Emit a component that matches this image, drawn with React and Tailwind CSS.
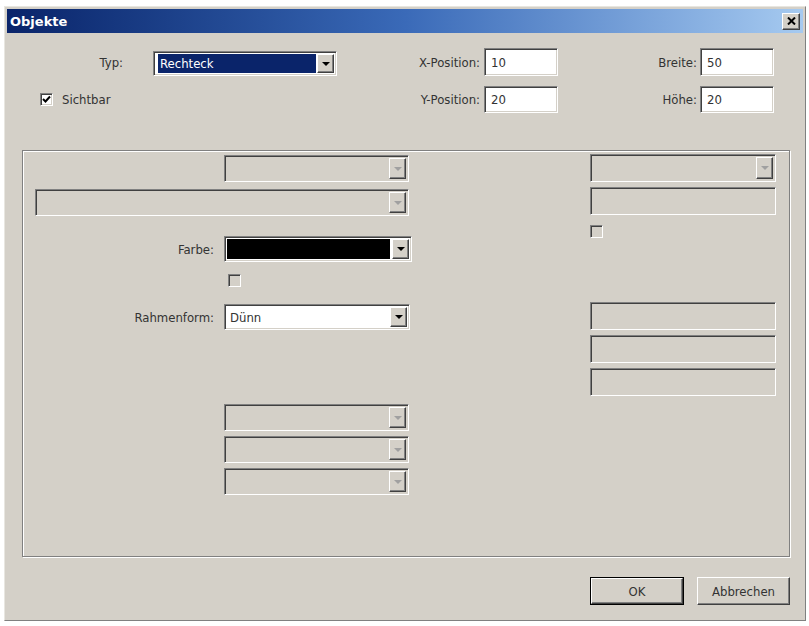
import React from "react";

const sunken =
  "border border-t-[#808080] border-l-[#808080] border-b-white border-r-white shadow-[inset_1px_1px_0_#404040,inset_-1px_-1px_0_#d4d0c8]";
const raised =
  "bg-[#d4d0c8] border border-t-white border-l-white border-b-[#404040] border-r-[#404040] shadow-[inset_-1px_-1px_0_#808080]";

const Arrow = ({ disabled }) => (
  <div className={`w-[17px] h-full shrink-0 flex items-center justify-center ${raised}`}>
    <div
      className={`w-0 h-0 border-l-[4px] border-r-[4px] border-t-[4px] border-l-transparent border-r-transparent ${
        disabled ? "border-t-[#a0a0a0]" : "border-t-black"
      }`}
    ></div>
  </div>
);

// combo box, sunken frame with the arrow button on the right
const Dropdown = ({ className = "", disabled, children }) => (
  <div
    className={`flex p-[2px] ${sunken} ${disabled ? "bg-[#d4d0c8]" : "bg-white"} ${className}`}
  >
    <div className="flex-1 flex items-center min-w-0">{children}</div>
    <Arrow disabled={disabled} />
  </div>
);

const TextBox = ({ className = "", disabled, value }) => (
  <div
    className={`flex items-center pl-[6px] text-[#333] ${sunken} ${disabled ? "bg-[#d4d0c8]" : "bg-white"} ${className}`}
  >
    {value}
  </div>
);

const CheckBox = ({ checked, disabled, className = "" }) => (
  <div
    className={`w-[13px] h-[13px] shrink-0 flex items-center justify-center ${sunken} ${
      disabled ? "bg-[#d4d0c8]" : "bg-white"
    } ${className}`}
  >
    {checked && (
      <svg width="9" height="9" viewBox="0 0 9 9">
        <path d="M1 4 L3.5 6.5 L8 1.5" stroke="#000" strokeWidth="2" fill="none" />
      </svg>
    )}
  </div>
);

const Label = ({ className = "", children }) => (
  <div className={`text-right text-[#333] ${className}`}>{children}</div>
);

export default function App() {
  return (
    <div className="w-[809px] h-[626px] bg-white pt-[6px] pl-[4px] font-['DejaVu_Sans_Condensed','DejaVu_Sans',sans-serif] text-[13px] leading-none">
      {/* Window */}
      <div className="w-[802px] h-[615px] bg-[#d4d0c8] border border-t-[#e8e6e0] border-l-[#e8e6e0] border-b-[#808080] border-r-[#808080] p-[2px] flex flex-col">
        {/* Title bar */}
        <div className="h-[24px] shrink-0 flex items-center justify-between bg-gradient-to-r from-[#0a246a] via-[#3a6ab8] to-[#a6caf0] pl-[3px] pr-[3px]">
          <span className="text-white font-bold text-[13px] font-['DejaVu_Sans',sans-serif]">Objekte</span>
          <div className={`w-[18px] h-[17px] flex items-center justify-center ${raised}`}>
            <svg width="9" height="8" viewBox="0 0 9 8">
              <path d="M1 0.5 L8 7.5 M8 0.5 L1 7.5" stroke="#000" strokeWidth="2" />
            </svg>
          </div>
        </div>

        {/* Body */}
        <div className="flex-1 flex flex-col">
          {/* Row 1 */}
          <div className="mt-[15px] h-[28px] flex items-center">
            <div className="w-[330px] flex items-center h-full">
              <Label className="w-[116px]">Typ:</Label>
              <Dropdown className="ml-[30px] w-[184px] h-[25px] self-end">
                <div className="ml-[2px] h-[19px] flex-1 bg-[#0a246a] text-white flex items-center pl-[2px] mr-[1px]">
                  Rechteck
                </div>
              </Dropdown>
            </div>
            <Label className="w-[143px]">X-Position:</Label>
            <TextBox className="ml-[4px] w-[74px] h-[28px]" value="10" />
            <Label className="w-[139px]">Breite:</Label>
            <TextBox className="ml-[3px] w-[74px] h-[28px]" value="50" />
          </div>

          {/* Row 2 */}
          <div className="mt-[10px] h-[27px] flex items-center">
            <div className="w-[330px] flex items-center">
              <CheckBox checked className="ml-[33px]" />
              <span className="ml-[9px] text-[#333]">Sichtbar</span>
            </div>
            <Label className="w-[143px]">Y-Position:</Label>
            <TextBox className="ml-[4px] w-[74px] h-[27px]" value="20" />
            <Label className="w-[139px]">Höhe:</Label>
            <TextBox className="ml-[3px] w-[74px] h-[27px]" value="20" />
          </div>

          {/* Group box */}
          <div className="mt-[37px] ml-[15px] w-[768px] h-[407px] border border-[#808080] shadow-[inset_1px_1px_0_#fff,1px_1px_0_#fff] grid grid-cols-[567px_186px]">
            {/* Left column */}
            <div className="pt-[4px] flex flex-col">
              <Dropdown disabled className="ml-[201px] w-[185px] h-[27px]" />
              <Dropdown disabled className="mt-[7px] ml-[12px] w-[374px] h-[27px]" />
              <div className="mt-[20px] flex items-center">
                <Label className="w-[191px]">Farbe:</Label>
                <Dropdown className="ml-[10px] w-[188px] h-[26px]">
                  <div className="h-full flex-1 bg-black mr-[2px]"></div>
                </Dropdown>
              </div>
              <CheckBox disabled className="mt-[12px] ml-[205px]" />
              <div className="mt-[17px] flex items-center">
                <Label className="w-[191px]">Rahmenform:</Label>
                <Dropdown className="ml-[10px] w-[186px] h-[26px]">
                  <span className="pl-[3px] text-[#333]">Dünn</span>
                </Dropdown>
              </div>
              <Dropdown disabled className="mt-[74px] ml-[201px] w-[185px] h-[27px]" />
              <Dropdown disabled className="mt-[5px] ml-[201px] w-[185px] h-[27px]" />
              <Dropdown disabled className="mt-[5px] ml-[201px] w-[185px] h-[27px]" />
            </div>

            {/* Right column */}
            <div className="pt-[3px] flex flex-col">
              <Dropdown disabled className="w-[186px] h-[28px]" />
              <TextBox disabled className="mt-[5px] w-[186px] h-[28px]" />
              <CheckBox disabled className="mt-[10px]" />
              <TextBox disabled className="mt-[64px] w-[186px] h-[28px]" />
              <TextBox disabled className="mt-[5px] w-[186px] h-[28px]" />
              <TextBox disabled className="mt-[5px] w-[186px] h-[28px]" />
            </div>
          </div>

          {/* Buttons */}
          <div className="mt-[20px] flex justify-end pr-[13px]">
            <div className="w-[94px] h-[28px] border border-black">
              <div className={`w-full h-full flex items-center justify-center text-[#333] ${raised}`}>OK</div>
            </div>
            <div className={`ml-[13px] w-[93px] h-[28px] flex items-center justify-center text-[#333] ${raised}`}>
              Abbrechen
            </div>
          </div>
        </div>
      </div>
    </div>
  );
}
